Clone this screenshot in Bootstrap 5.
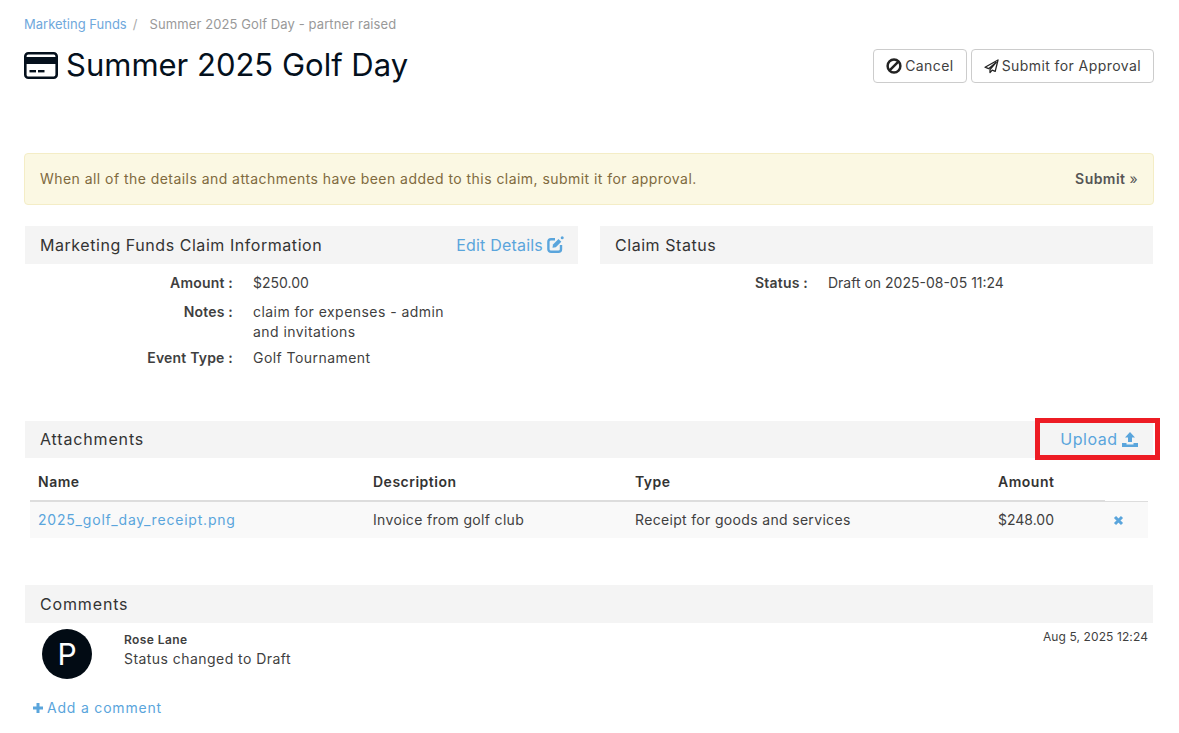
<!DOCTYPE html>
<html lang="en">
<head>
    <meta charset="UTF-8">
    <meta name="viewport" content="width=device-width, initial-scale=1.0">
    <title>Summer 2025 Golf Day</title>
    <link rel="stylesheet" href="https://cdn.jsdelivr.net/npm/bootstrap@5.3.0/dist/css/bootstrap.min.css">
    <style>
        body { font-family: Inter, "Liberation Sans", sans-serif; font-size: 14px; letter-spacing: .45px; color: #3f3f3f; background: #fff; }
        a { color: #5aa5dc; text-decoration: none; }
        .digits { letter-spacing: 0; }
        .page-wrap { padding: 15px 25px 0 24px; height: 733px; overflow: hidden; }
        .crumbs { font-size: 13px; line-height: 18px; margin-bottom: 0; color: #999; letter-spacing: .1px; }
        .crumbs a { letter-spacing: 0; color: #6fa8dc; }
        .crumbs .breadcrumb-item + .breadcrumb-item { padding-left: 6px; }
        .crumbs .breadcrumb-item + .breadcrumb-item::before { padding-right: 12px; color: #aaa; }
        .crumbs .breadcrumb-item.active { color: #999; }
        .title-row { margin-top: 9px; height: 111px; }
        .page-title { font-size: 31px; font-weight: 400; line-height: 44px; letter-spacing: 0; color: #04101c; margin: 1px 0 0; gap: 8px; }
        .title-btns { padding-top: 7px; gap: 4px; }
        .btn-plain { font-size: 14px; letter-spacing: .42px; line-height: 20px; padding: 6px 12px; border: 1px solid #ccc; border-radius: 4px; color: #3f3f3f; background: #fff; display: flex; align-items: center; gap: 3px; height: 34px; }
        .note-bar { background: #fbf8e3; border: 1px solid #f4edc6; border-radius: 4px; color: #7f6a3e; height: 52px; padding: 0 15px 2px; margin-bottom: 21px; }
        .note-bar strong { color: #555; font-weight: 600; }
        .panel-head { background: #f4f4f4; margin: 0 1px; height: 38px; padding: 0 15px 1px; font-size: 16px; letter-spacing: .55px; color: #333; }
        .panel-head a { font-size: 16px; display: flex; align-items: center; gap: 4px; }
        .edit-link { letter-spacing: .2px; margin-right: -1px; }
        .head-wide { letter-spacing: .85px; }
        .info-cols { gap: 20px; }
        .info-list { display: grid; grid-template-columns: 209px 200px; margin: 9px 0 0; row-gap: 6px; line-height: 20px; }
        .info-list dt { text-align: right; font-weight: 600; margin: 0; white-space: nowrap; letter-spacing: .2px; }
        .info-list dd { margin: 0 0 0 20px; white-space: nowrap; }
        .info-list .first-row { margin-bottom: 3px; }
        .attach-section { margin-top: 53px; }
        .attach-head { height: 37px; }
        .upload-box { outline: 5px solid #ed1c24; height: 32px; width: 115px; margin-right: -17px; padding-left: 3px; justify-content: center; }
        .attach-table { margin: 5px 6px 0; width: calc(100% - 12px); table-layout: fixed; }
        .attach-table th { font-weight: 600; color: #333; padding: 8px; height: 37px; border-bottom: 2px solid #ddd; vertical-align: middle; letter-spacing: .5px; }
        .attach-table th:last-child { border-bottom: 1px solid #ddd; }
        .attach-table td { background: #f9f9f9; padding: 7px 8px 8px; height: 36px; vertical-align: middle; border: 0; color: #3f3f3f; letter-spacing: .33px; }
        .attach-table td a { letter-spacing: .8px; }
        .attach-table td.digits { letter-spacing: 0; }
        .comments-section { margin-top: 47px; }
        .comment-row { padding: 6px 6px 0 18px; }
        .avatar-dot { width: 50px; height: 50px; border-radius: 50%; background: #020b14; color: #fff; font-size: 30px; letter-spacing: 0; line-height: 50px; text-align: center; flex: none; margin-right: 32px; }
        .comment-name { font-size: 12px; font-weight: 600; line-height: 17px; margin-top: 2px; letter-spacing: .4px; }
        .comment-text { line-height: 20px; margin-top: 1px; }
        .comment-date { font-size: 12px; line-height: 16px; letter-spacing: .1px; }
        .add-comment { display: inline-flex; align-items: center; gap: 3px; margin: 19px 0 0 8px; line-height: 20px; letter-spacing: .8px; }
    </style>
</head>
<body>
<div class="page-wrap">
    <ol class="breadcrumb crumbs">
        <li class="breadcrumb-item"><a href="#">Marketing Funds</a></li>
        <li class="breadcrumb-item active">Summer 2025 Golf Day - partner raised</li>
    </ol>

    <div class="d-flex justify-content-between title-row">
        <h1 class="page-title d-flex align-items-center align-self-start">
            <svg width="34" height="27" viewBox="0 0 34 27"><rect x="1.300" y="1.300" width="31.400" height="24.400" rx="3" fill="none" stroke="#04101c" stroke-width="2.600"/><rect x="1.500" y="5" width="31" height="7" fill="#04101c"/><rect x="5.500" y="18" width="6.500" height="2.400" fill="#04101c"/><rect x="14" y="18" width="6.500" height="2.400" fill="#04101c"/></svg>
            Summer 2025 Golf Day
        </h1>
        <div class="d-flex align-items-start title-btns">
            <button class="btn-plain">
                <svg width="16" height="16" viewBox="0 0 15 15"><circle cx="7.500" cy="7.500" r="6" fill="none" stroke="#222" stroke-width="2.300"/><line x1="3.400" y1="11.600" x2="11.600" y2="3.400" stroke="#222" stroke-width="2.300"/></svg>
                Cancel
            </button>
            <button class="btn-plain">
                <svg width="15" height="15" viewBox="0 0 15 15"><path d="M14 1 1 8.200l3.600 1.500L12 3.500 6 10.600v3l2.200-2.500 3 1.300z" fill="none" stroke="#222" stroke-width="1.300" stroke-linejoin="round"/></svg>
                Submit for Approval
            </button>
        </div>
    </div>

    <div class="note-bar d-flex align-items-center justify-content-between">
        <span>When all of the details and attachments have been added to this claim, submit it for approval.</span>
        <strong>Submit <span class="fw-normal">»</span></strong>
    </div>

    <div class="d-flex info-cols">
        <div class="flex-fill w-50">
            <div class="panel-head d-flex align-items-center justify-content-between">
                <span>Marketing Funds Claim Information</span>
                <a href="#" class="edit-link">Edit Details
                    <svg width="17" height="17" viewBox="0 0 17 17"><path d="M8 3.200H4a2.600 2.600 0 0 0-2.600 2.600v7.400A2.600 2.600 0 0 0 4 15.800h7.400a2.600 2.600 0 0 0 2.600-2.600V9" fill="none" stroke="#5aa5dc" stroke-width="2.400"/><path d="M5.500 11.800 6 8.500 11.500 3l2.800 2.800-5.500 5.500z" fill="#5aa5dc"/><circle cx="15.200" cy="1.800" r="1.500" fill="#5aa5dc"/></svg>
                </a>
            </div>
            <dl class="info-list">
                <dt>Amount :</dt><dd class="digits first-row">$250.00</dd>
                <dt>Notes :</dt><dd>claim for expenses - admin<br>and invitations</dd>
                <dt>Event Type :</dt><dd>Golf Tournament</dd>
            </dl>
        </div>
        <div class="flex-fill w-50">
            <div class="panel-head d-flex align-items-center">Claim Status</div>
            <dl class="info-list">
                <dt>Status :</dt><dd class="digits">Draft on 2025-08-05 11:24</dd>
            </dl>
        </div>
    </div>

    <div class="attach-section">
        <div class="panel-head attach-head d-flex align-items-center justify-content-between">
            <span class="head-wide">Attachments</span>
            <a href="#" class="upload-box">Upload
                <svg width="16" height="15" viewBox="0 0 16 15"><path d="M8 0 13 5.500H10V10H6V5.500H3zM0 11h4.500v1.500h7V11H16v4H0z" fill="#5aa5dc"/></svg>
            </a>
        </div>
        <table class="attach-table">
            <colgroup><col width="335"><col width="262"><col width="363"><col width="115"><col width="43"></colgroup>
            <thead>
                <tr><th>Name</th><th>Description</th><th>Type</th><th>Amount</th><th></th></tr>
            </thead>
            <tbody>
                <tr>
                    <td><a href="#">2025_golf_day_receipt.png</a></td>
                    <td>Invoice from golf club</td>
                    <td>Receipt for goods and services</td>
                    <td class="digits">$248.00</td>
                    <td><svg width="11" height="11" viewBox="0 0 11 11"><path d="M2 2 9 9M9 2 2 9" stroke="#5aa5dc" stroke-width="3"/></svg></td>
                </tr>
            </tbody>
        </table>
    </div>

    <div class="comments-section">
        <div class="panel-head d-flex align-items-center"><span class="head-wide">Comments</span></div>
        <div class="d-flex comment-row">
            <div class="avatar-dot">P</div>
            <div class="flex-fill">
                <div class="comment-name">Rose Lane</div>
                <div class="comment-text">Status changed to Draft</div>
            </div>
            <div class="comment-date">Aug 5, 2025 12:24</div>
        </div>
        <a href="#" class="add-comment">
            <svg width="12" height="12" viewBox="0 0 12 12"><path d="M6 1v10M1 6h10" stroke="#5aa5dc" stroke-width="3"/></svg>
            Add a comment
        </a>
    </div>
</div>
</body>
</html>
